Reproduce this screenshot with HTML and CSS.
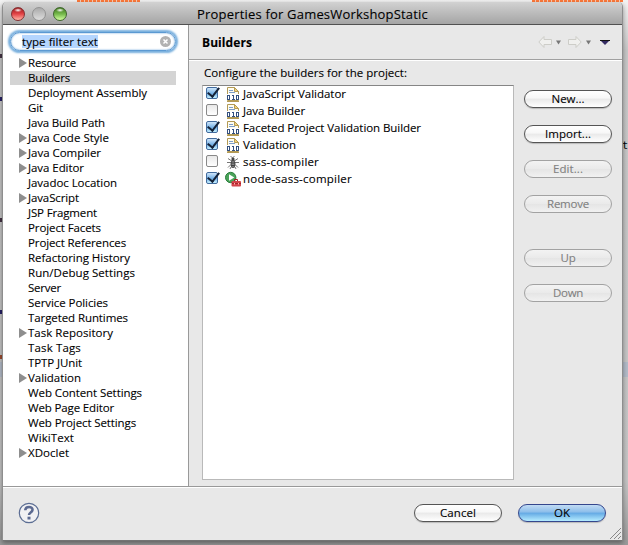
FILE: index.html
```html
<!DOCTYPE html>
<html lang="en">
<head>
<meta charset="utf-8">
<title>Properties for GamesWorkshopStatic</title>
<link rel="stylesheet" href="styles.css">
</head>
<body>
<svg class="defs" width="0" height="0">
  <symbol id="builder" viewBox="0 0 16 16"><path d="M2.500 14.500v-13h7l4 4v9z" fill="#fffdf0" stroke="#b39a55"/><path d="M9.500 1.500v4h4z" fill="#f5d477" stroke="#b39a55"/><path d="M4 4.500h4M4 6.500h6" stroke="#7d9dc9"/><path d="M2 8h12v6H2z" fill="#fff"/><g fill="none" stroke="#34507e"><rect x="2.500" y="9.500" width="2" height="4"/><path d="M7 9.500h1.500M8.500 9v4M7 13.500h3"/><rect x="11.500" y="9.500" width="2" height="4"/></g><path d="M2 15.500h12" stroke="#b39a55"/></symbol>
  <symbol id="bug" viewBox="0 0 16 16"><g fill="none" stroke="#777"><path d="M5.500 2l2 2 2-2M3 4.500l3 2h4l3-2M2 8.500h12M3 13.500l3-3h4l3 3M5 15l1-2h4l1 2"/></g><ellipse cx="8" cy="10" rx="2" ry="3.500" fill="#888" stroke="#444"/><path d="M6 9h4M6 11.500h4" stroke="#444"/><circle cx="8" cy="5" r="1.600" fill="#444"/></symbol>
  <symbol id="run" viewBox="0 0 16 16"><circle cx="5.700" cy="6.500" r="5.200" fill="#4aa35a" stroke="#2b7d3c"/><path d="M4 3.200l5.300 3.300L4 9.800z" fill="#fff"/><path d="M9.500 10V8.500h3V10" fill="none" stroke="#a31c22"/><rect x="6.500" y="10" width="9.500" height="5.500" rx="1" fill="#d2434a"/><path d="M7 12.500h9" stroke="#a3262c"/><path d="M9.500 12v1.500m4-1.500v1.500" stroke="#ffb2ac"/></symbol>
</svg>
<div class="backdrop"><i class="squiggle one"></i><i class="squiggle two"></i><span class="stray">t</span><i class="mark a"></i><i class="mark b"></i><i class="mark c"></i><i class="mark d"></i><i class="mark e"></i><i class="line"></i></div>
<main class="window">
  <header class="titlebar"><i class="light red"></i><i class="light grey"></i><i class="light green"></i><h1><span class="fit" data-w="231">Properties for GamesWorkshopStatic</span></h1></header>
  <div class="body">
    <aside>
      <div class="search"><span class="fit" data-w="76">type filter text</span><svg width="11" height="11" viewBox="0 0 11 11"><circle cx="5.500" cy="5.500" r="5.500" fill="#b2b2b2"/><path d="M3.500 3.500l4 4m0-4l-4 4" stroke="#fff" stroke-width="1.500"/></svg></div>
      <ul class="tree">
        <li class="parent"><span class="fit" data-w="48">Resource</span></li>
        <li class="selected"><span class="fit" data-w="42">Builders</span></li>
        <li><span class="fit" data-w="119">Deployment Assembly</span></li>
        <li><span class="fit" data-w="15">Git</span></li>
        <li><span class="fit" data-w="77">Java Build Path</span></li>
        <li class="parent"><span class="fit" data-w="81">Java Code Style</span></li>
        <li class="parent"><span class="fit" data-w="73">Java Compiler</span></li>
        <li class="parent"><span class="fit" data-w="56">Java Editor</span></li>
        <li><span class="fit" data-w="89">Javadoc Location</span></li>
        <li class="parent"><span class="fit" data-w="51">JavaScript</span></li>
        <li><span class="fit" data-w="69">JSP Fragment</span></li>
        <li><span class="fit" data-w="73">Project Facets</span></li>
        <li><span class="fit" data-w="98">Project References</span></li>
        <li><span class="fit" data-w="102">Refactoring History</span></li>
        <li><span class="fit" data-w="107">Run/Debug Settings</span></li>
        <li><span class="fit" data-w="33">Server</span></li>
        <li><span class="fit" data-w="80">Service Policies</span></li>
        <li><span class="fit" data-w="100">Targeted Runtimes</span></li>
        <li class="parent"><span class="fit" data-w="85">Task Repository</span></li>
        <li><span class="fit" data-w="53">Task Tags</span></li>
        <li><span class="fit" data-w="54">TPTP JUnit</span></li>
        <li class="parent"><span class="fit" data-w="53">Validation</span></li>
        <li><span class="fit" data-w="114">Web Content Settings</span></li>
        <li><span class="fit" data-w="86">Web Page Editor</span></li>
        <li><span class="fit" data-w="108">Web Project Settings</span></li>
        <li><span class="fit" data-w="46">WikiText</span></li>
        <li class="parent"><span class="fit" data-w="41">XDoclet</span></li>
      </ul>
    </aside>
    <section class="page">
      <div class="heading"><h2><span class="fit" data-w="50">Builders</span></h2>
        <svg class="nav" width="74" height="14" viewBox="0 0 74 14"><g fill="#f0f0ee" stroke="#cdcdc8"><path d="M.8 7L6 1.500v3h7.500v5H6v3z"/><path d="M43.200 7L38 1.500v3h-7.500v5H38v3z"/></g><path d="M18 5.500h5l-2.500 4zM48 5.500h5l-2.500 4z" fill="#777"/><path d="M62 5h10l-5 5z" fill="#342b62"/><path d="M62 5.500h10" stroke="#111"/></svg>
      </div>
      <div class="content">
        <div class="left"><p><span class="fit" data-w="203">Configure the builders for the project:</span></p>
          <ul class="builders">
            <li><i class="check on"></i><svg><use href="#builder"/></svg><span class="fit" data-w="103">JavaScript Validator</span></li>
            <li><i class="check"></i><svg><use href="#builder"/></svg><span class="fit" data-w="62">Java Builder</span></li>
            <li><i class="check on"></i><svg><use href="#builder"/></svg><span class="fit" data-w="178">Faceted Project Validation Builder</span></li>
            <li><i class="check on"></i><svg><use href="#builder"/></svg><span class="fit" data-w="53">Validation</span></li>
            <li><i class="check"></i><svg><use href="#bug"/></svg><span class="fit" data-w="76">sass-compiler</span></li>
            <li><i class="check on"></i><svg><use href="#run"/></svg><span class="fit" data-w="109">node-sass-compiler</span></li>
          </ul>
        </div>
        <div class="actions">
          <button><span class="fit" data-w="33">New...</span></button><button><span class="fit" data-w="46">Import...</span></button><button disabled><span class="fit" data-w="30">Edit...</span></button><button disabled><span class="fit" data-w="42">Remove</span></button><button class="up" disabled><span class="fit" data-w="15">Up</span></button><button disabled><span class="fit" data-w="30">Down</span></button>
        </div>
      </div>
    </section>
  </div>
  <footer><svg class="help" width="22" height="22" viewBox="0 0 22 22"><circle cx="11" cy="11" r="9.700" fill="#f1f1f3" stroke="#5b6d93" stroke-width="1.200"/><path d="M7.300 8.300C7.300 3.700 15 4 14.500 8c-.3 2.500-3.500 2.500-3.500 5" fill="none" stroke="#5c6a91" stroke-width="2.500"/><rect x="9.500" y="14.700" width="3" height="2.800" fill="#5c6a91"/></svg>
    <button><span class="fit" data-w="36">Cancel</span></button><button class="default"><span class="fit" data-w="16">OK</span></button>
    <svg class="grip" width="11" height="11" viewBox="0 0 11 11"><path d="M0 11L11 0M4 11l7-7M8 11l3-3" stroke="#888"/></svg>
  </footer>
</main>
<script src="fit.js"></script>
</body>
</html>
```
FILE: fit.js
```js
// Distribute each label's tracking over its characters to reach its design width.
document.querySelectorAll('.fit').forEach(function (el) {
  var natural = el.getBoundingClientRect().width;
  el.style.letterSpacing = (Number(el.dataset.w) - natural) / el.textContent.length + 'px';
});
```
FILE: styles.css
```css
* { box-sizing: border-box; }
body { margin: 0; width: 628px; height: 545px; overflow: hidden; position: relative; background: #f4f4f4; font: 11.5px/15px "Open Sans", "Noto Sans", sans-serif; color: #000; -webkit-text-stroke: 0.1px; }
h1, h2, p, ul { margin: 0; padding: 0; font: inherit; list-style: none; }
.fit { display: inline-block; white-space: nowrap; }
.defs { position: absolute; }
.backdrop { position: absolute; inset: 0; background: linear-gradient(#f3f3f3 0, #c8c8c8 50px, #c5c5c5 480px, #999 545px); }
.squiggle { position: absolute; top: 0; height: 2px; background: repeating-linear-gradient(90deg, #ff7a3b 0 3px, #f9cdb8 3px 4px); }
.one { left: 77px; width: 63px; }
.two { left: 532px; width: 91px; }
.stray { position: absolute; left: 622px; top: 138px; font: 10px/15px "DejaVu Sans Mono", monospace; }
.mark { position: absolute; left: 0; width: 2px; height: 4px; background: #443344; }
.a { top: 54px; } .b { top: 97px; background: #262064; } .c { top: 218px; } .d { top: 310px; background: #262064; } .e { top: 355px; background: #9a4b30; }
.line { position: absolute; left: 0; right: 0; top: 362px; height: 15px; background: #b4bcc9; }
.window { position: absolute; left: 2px; top: 2px; width: 621px; height: 539px; display: flex; flex-direction: column; border: 1px solid #8e8e8e; border-top: 0; border-bottom-color: #747474; border-radius: 5px 5px 0 0; background: #e8e8e8; box-shadow: 0 2px 5px #0006; overflow: hidden; }
.titlebar { height: 23px; flex: none; display: flex; align-items: center; gap: 7px; padding: 1px 0 0 8px; border-bottom: 1px solid #515151; background: linear-gradient(#d2d2d2, #c4c4c4 30%, #a5a5a5); }
.titlebar h1 { font-size: 13px; margin-left: 123px; line-height: 20px; }
.light { width: 14px; height: 14px; border-radius: 50%; border: 1px solid #777; }
.red { background: radial-gradient(ellipse 4px 2px at 50% 18%, #fff, #fff0), linear-gradient(#9b1719, #e44548 50%, #ffb5a6); border-color: #853032; }
.grey { background: linear-gradient(#aaa, #c4c4c4 50%, #ddd); border-color: #929292; }
.green { background: radial-gradient(ellipse 4px 2px at 50% 18%, #fff, #fff0), linear-gradient(#40771d, #75b94b 50%, #d2ff9f); border-color: #3e662c; }
.body { height: 461px; flex: none; display: flex; }
aside { width: 186px; background: #fff; border-right: 1px solid #999; padding: 7px 0 0 7px; }
.search { width: 166px; height: 19px; margin-bottom: 5px; display: flex; align-items: center; justify-content: space-between; padding: 0 4px 0 11px; border-radius: 10px; border: 1px solid #5b99d2; box-shadow: 0 0 2px 2px #76aedd, inset 0 0 2px #5e9ed7; }
.search span { background: #b4d5fe; line-height: 13px; }
.tree li { position: relative; height: 15px; padding-left: 18px; width: 166px; line-height: 13px; }
.tree .selected { background: linear-gradient(#d4d4d4 14px, transparent 14px); }
.parent::before { content: ""; position: absolute; left: 9px; top: 2px; border-left: 8px solid #8e8e8e; border-top: 5px solid transparent; border-bottom: 5px solid transparent; }
.page { flex: 1; min-width: 0; display: flex; flex-direction: column; }
.heading { height: 35px; flex: none; display: flex; align-items: center; justify-content: space-between; padding: 0 10px 0 13px; border-bottom: 1px solid #a0a0a0; box-shadow: 0 1px #fff; }
.heading h2 { font-size: 12px; font-weight: 700; }
.content { flex: 1; display: flex; gap: 10px; padding: 5px 10px 6px 13px; }
.left { width: 312px; display: flex; flex-direction: column; }
.left p { height: 20px; padding: 0 0 0 2px; line-height: 15px; }
.builders { flex: 1; background: #fff; border: 1px solid #b9b9b9; border-top-color: #858585; }
.builders li { height: 17px; display: flex; align-items: flex-start; padding-left: 3px; }
.builders span { line-height: 13px; padding-top: 1px; }
.builders svg { width: 16px; height: 16px; margin: 0 2px 0 7px; flex: none; }
.check { width: 12px; height: 12px; flex: none; position: relative; margin-top: 1px; border: 1px solid #888; border-radius: 2px; background: linear-gradient(#e8e8e8, #fff); }
.check.on { border-color: #426b9d; background: linear-gradient(#cee5fa, #75b1e6 55%, #c4efff); }
.check.on::after { content: ""; position: absolute; left: 3px; top: -3px; width: 5px; height: 10px; border: solid #142238; border-width: 0 2px 2px 0; transform: rotate(38deg); }
.actions { width: 88px; display: flex; flex-direction: column; gap: 17px; padding-top: 25px; }
button { width: 88px; height: 18px; flex: none; padding: 0; border: 1px solid #555; border-radius: 9px; font: inherit; line-height: 14px; color: #000; background: linear-gradient(#fff, #f7f7f7 45%, #e9e9e9 50%, #fff); box-shadow: 0 1px 1px #0003; }
button:disabled { color: #808080; border-color: #a2a2a2; background: linear-gradient(#f3f3f3, #eaeaea 50%, #e5e5e5 51%, #f1f1f1); box-shadow: none; }
.up { margin-top: 19px; }
footer { position: relative; flex: 1; border-top: 1px solid #999; box-shadow: inset 0 1px #fff; display: flex; gap: 16px; padding: 17px 16px 0 15px; }
.help { margin-right: auto; margin-top: -2px; }
.default { border-color: #35478d; background: linear-gradient(#c2dcf4, #8bbdea 45%, #63a9e4 50%, #b5ecff); }
.grip { position: absolute; right: 1px; bottom: 1px; }
```
